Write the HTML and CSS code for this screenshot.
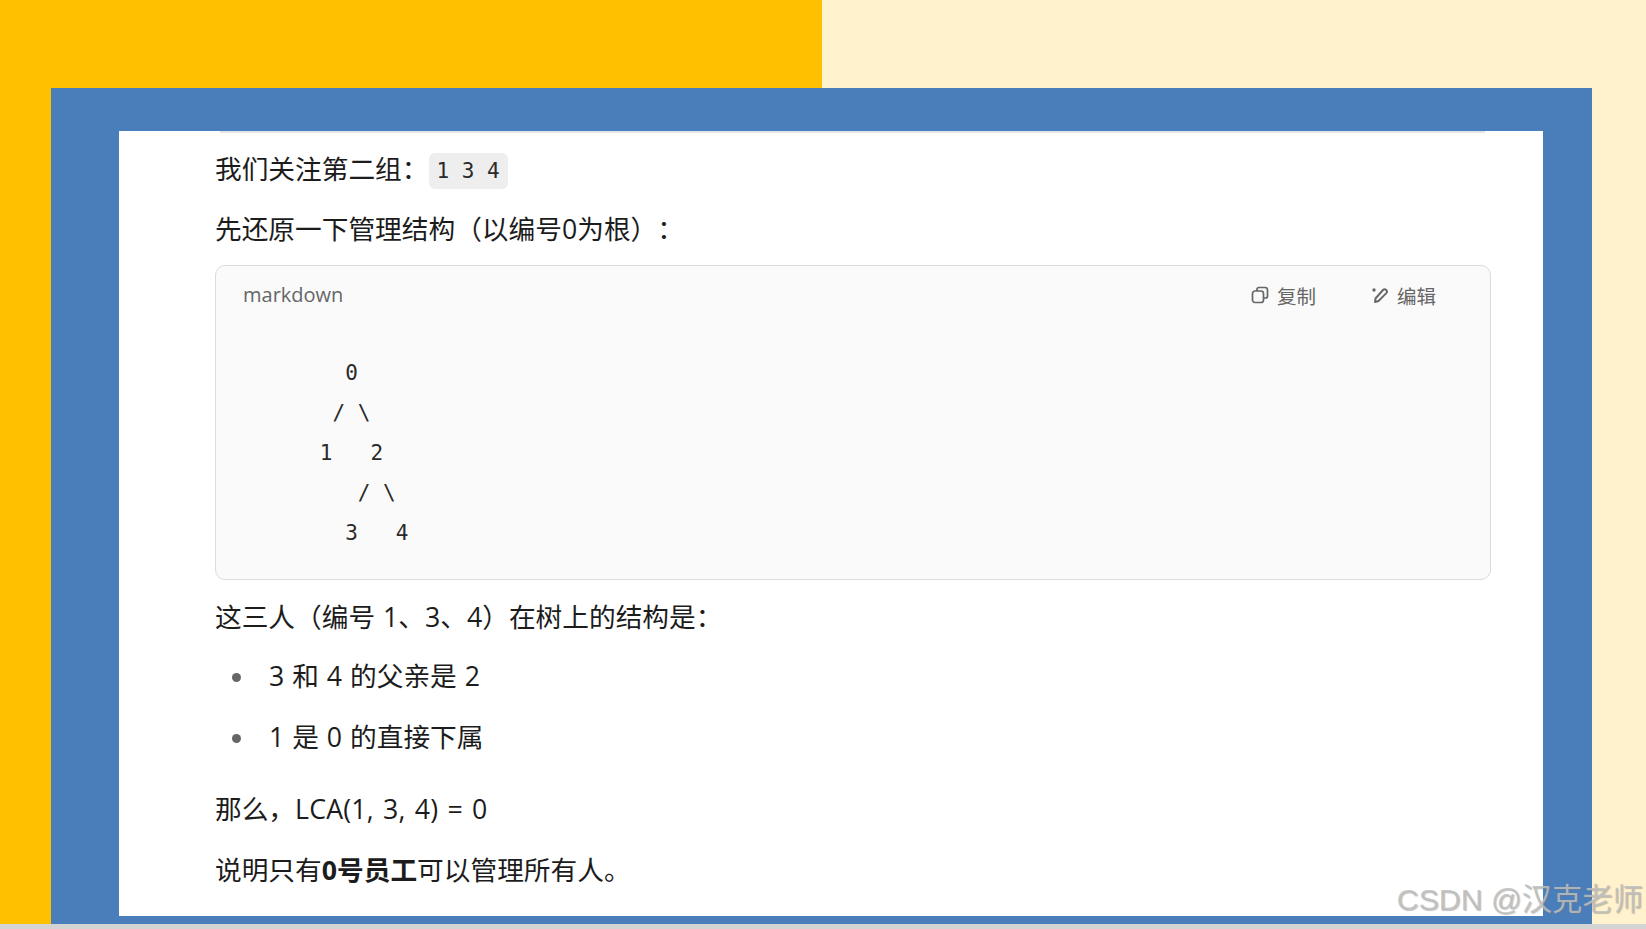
FILE: index.html
```html
<!DOCTYPE html>
<html lang="zh-CN">
<head>
<meta charset="utf-8">
<title>LCA</title>
<link rel="stylesheet" href="styles.css">
</head>
<body>
<div class="slide">
  <div class="panel">
    <main class="sheet">
      <p class="line first">我们关注第二组&#xFF1A;<code class="inline-code">1 3 4</code></p>
      <p class="line second">先还原一下管理结构&#xFF08;以编号0为根&#xFF09;&#xFF1A;</p>
      <section class="code-card">
        <header class="code-head">
          <span class="code-lang">markdown</span>
          <div class="code-actions">
            <span class="code-action">
              <svg class="icon" viewBox="0 0 18 18" fill="none" stroke="currentColor" stroke-width="1.7" stroke-linejoin="round"><rect x="1.5" y="5" width="11" height="11.5" rx="2.5"/><path d="M6 5V3.5a2 2 0 0 1 2-2h6a2.5 2.5 0 0 1 2.5 2.5V10a2 2 0 0 1-2 2h-1.5"/></svg>
              复制
            </span>
            <span class="code-action">
              <svg class="icon" viewBox="0 0 18 18" fill="none" stroke="currentColor" stroke-width="1.9" stroke-linejoin="round" stroke-linecap="round"><path d="M7.5 15l-3.500 1 .5-3.500 7.500-8.500a2.300 2.300 0 0 1 3.300 3.200z"/><circle cx="3" cy="4" r="1.700" fill="currentColor" stroke="none"/></svg>
              编辑
            </span>
          </div>
        </header>
<pre class="code-body">        0
       / \
      1   2
         / \
        3   4</pre>
      </section>
      <p class="line after-code">这三人&#xFF08;编号 1、3、4&#xFF09;在树上的结构是&#xFF1A;</p>
      <ul class="points">
        <li class="point">3 和 4 的父亲是 2</li>
        <li class="point">1 是 0 的直接下属</li>
      </ul>
      <p class="line result">那么&#xFF0C;<span class="latin">LCA(1, 3, 4) = 0</span></p>
      <p class="line last">说明只有<strong class="strong">0号员工</strong>可以管理所有人。</p>
    </main>
  </div>
  <div class="watermark">CSDN @汉克老师</div>
</div>
</body>
</html>
```
FILE: styles.css
```css
* { box-sizing: border-box; }
html, body { margin: 0; height: 100%; }
body {
  background: #d4d4d4;
  overflow: hidden;
  font-family: "Open Sans", "Noto Sans CJK SC", sans-serif;
  color: #1c1c1c;
}
.slide {
  position: relative;
  width: 1646px;
  height: 924px;
  padding: 88px 54px 0 51px;
  background: linear-gradient(to right, #ffc000 822px, #fff2cc 822px);
}
.panel {
  height: 836px;
  padding: 43px 49px 8px 68px;
  background: #4a7ebb;
}
.sheet {
  height: 785px;
  padding: 0 52px 0 96px;
  background: #fff;
  overflow: hidden;
}
.sheet::before {
  content: "";
  display: block;
  height: 2px;
  margin: 0 6px 0 5px;
  background: #e2e4ea;
}
.line {
  margin: 0;
  font-size: 26.7px;
  line-height: 40px;
  word-spacing: 1px;
  text-spacing-trim: space-all;
}
.first { padding-top: 16px; }
.second { margin-top: 20px; }
.inline-code {
  display: inline-block;
  padding: 0 8px;
  height: 36px;
  line-height: 36px;
  font-family: "DejaVu Sans Mono", monospace;
  font-size: 21px;
  color: #2a2a2a;
  background: #eee;
  border-radius: 6px;
  vertical-align: 1px;
  word-spacing: 0;
}
.code-card {
  margin-top: 16px;
  height: 315px;
  border: 1px solid #dcdcdc;
  border-radius: 10px;
  background: #fafafa;
}
.code-head {
  display: flex;
  justify-content: space-between;
  align-items: center;
  height: 58px;
  padding: 0 54px 0 27px;
  color: #666;
  font-size: 20px;
}
.code-lang { margin-top: -2px; }
.code-actions { display: flex; gap: 55px; }
.code-action { display: flex; align-items: center; gap: 8px; font-size: 19.5px; }
.icon { width: 18px; height: 18px; }
.code-body {
  margin: 29px 0 0;
  padding-left: 28px;
  font-family: "DejaVu Sans Mono", monospace;
  font-size: 21px;
  line-height: 40px;
  color: #2a2a2a;
}
.after-code { margin-top: 17px; }
.points { margin: 17px 0 0; padding: 0; list-style: none; }
.point {
  display: flex;
  align-items: center;
  height: 40px;
  margin-bottom: 21px;
  padding-left: 17px;
  font-size: 26.7px;
  word-spacing: 1px;
}
.point::before {
  content: "";
  width: 9px;
  height: 9px;
  margin: 7px 28px 0 0;
  border-radius: 50%;
  background: #666;
}
.result { margin-top: 34px; }
.latin { letter-spacing: 0.2px; word-spacing: 2px; }
.last { margin-top: 21px; }
.strong { font-weight: 700; }
.watermark {
  position: absolute;
  right: 3px;
  bottom: 6px;
  font-family: "Liberation Sans", "Noto Sans CJK SC", sans-serif;
  font-size: 30.3px;
  line-height: 36px;
  color: rgba(190, 190, 190, 0.85);
  text-shadow: 1px 1px 1px rgba(120, 120, 120, 0.45);
}
```
